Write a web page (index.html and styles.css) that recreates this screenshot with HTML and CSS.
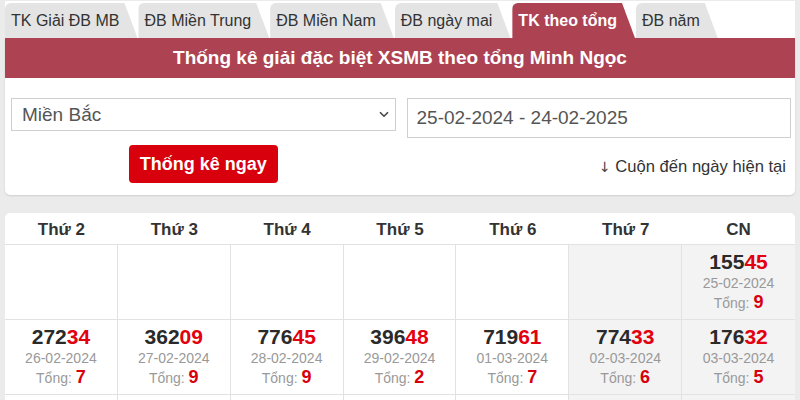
FILE: index.html
```html
<!DOCTYPE html>
<html lang="vi">
<head>
<meta charset="utf-8">
<title>Thống kê giải đặc biệt XSMB theo tổng</title>
<link rel="stylesheet" href="styles.css">
</head>
<body>
<div class="wrap">
  <nav class="tabs">
    <a class="tab">TK Giải ĐB MB</a>
    <a class="tab">ĐB Miền Trung</a>
    <a class="tab">ĐB Miền Nam</a>
    <a class="tab">ĐB ngày mai</a>
    <a class="tab active">TK theo tổng</a>
    <a class="tab">ĐB năm</a>
  </nav>
  <section class="panel">
    <h1 class="panel-title">Thống kê giải đặc biệt XSMB theo tổng Minh Ngọc</h1>
    <div class="form">
      <div class="select-wrap">
        <select class="field select"><option>Miền Bắc</option></select>
        <svg class="chev" width="10" height="7" viewBox="0 0 10 7"><path d="M1 1.2 L5 5.2 L9 1.2" fill="none" stroke="#444" stroke-width="1.6"/></svg>
      </div>
      <input class="field date" type="text" value="25-02-2024 - 24-02-2025">
      <div class="btn-cell"><button class="btn">Thống kê ngay</button></div>
      <a class="scroll-link"><span class="arrow">&#8595;&#xFE0E;</span> Cuộn đến ngày hiện tại</a>
    </div>
  </section>
  <section class="calendar">
    <div class="head">Thứ 2</div>
    <div class="head">Thứ 3</div>
    <div class="head">Thứ 4</div>
    <div class="head">Thứ 5</div>
    <div class="head">Thứ 6</div>
    <div class="head">Thứ 7</div>
    <div class="head">CN</div>

    <div class="cell"></div>
    <div class="cell"></div>
    <div class="cell"></div>
    <div class="cell"></div>
    <div class="cell"></div>
    <div class="cell weekend"></div>
    <div class="cell weekend last">
      <div class="num">155<span class="tail">45</span></div>
      <div class="day">25-02-2024</div>
      <div class="sum">Tổng: <b>9</b></div>
    </div>

    <div class="cell">
      <div class="num">272<span class="tail">34</span></div>
      <div class="day">26-02-2024</div>
      <div class="sum">Tổng: <b>7</b></div>
    </div>
    <div class="cell">
      <div class="num">362<span class="tail">09</span></div>
      <div class="day">27-02-2024</div>
      <div class="sum">Tổng: <b>9</b></div>
    </div>
    <div class="cell">
      <div class="num">776<span class="tail">45</span></div>
      <div class="day">28-02-2024</div>
      <div class="sum">Tổng: <b>9</b></div>
    </div>
    <div class="cell">
      <div class="num">396<span class="tail">48</span></div>
      <div class="day">29-02-2024</div>
      <div class="sum">Tổng: <b>2</b></div>
    </div>
    <div class="cell">
      <div class="num">719<span class="tail">61</span></div>
      <div class="day">01-03-2024</div>
      <div class="sum">Tổng: <b>7</b></div>
    </div>
    <div class="cell weekend">
      <div class="num">774<span class="tail">33</span></div>
      <div class="day">02-03-2024</div>
      <div class="sum">Tổng: <b>6</b></div>
    </div>
    <div class="cell weekend last">
      <div class="num">176<span class="tail">32</span></div>
      <div class="day">03-03-2024</div>
      <div class="sum">Tổng: <b>5</b></div>
    </div>

    <div class="cell"></div>
    <div class="cell"></div>
    <div class="cell"></div>
    <div class="cell"></div>
    <div class="cell"></div>
    <div class="cell weekend"></div>
    <div class="cell weekend last"></div>
  </section>
</div>
</body>
</html>
```
FILE: styles.css
```css
* { box-sizing: border-box; }
html, body { margin: 0; padding: 0; }
body {
  background: #ebebeb;
  font-family: "Liberation Sans", Arial, sans-serif;
  color: #333;
  overflow: hidden;
  height: 400px;
}
.wrap {
  margin: 1px 5px 0;
}
.tabs {
  display: flex;
  gap: 1px;
  background: #fff;
  padding-top: 2px;
  height: 37px;
}
.tab {
  display: flex;
  align-items: center;
  height: 35px;
  padding: 1px 18px 0 6px;
  font-size: 16px;
  color: #333;
  background: #e4e4e4;
  border-top-left-radius: 6px;
  clip-path: polygon(0 0, calc(100% - 13px) 0, 100% 100%, 0 100%);
  white-space: nowrap;
}
.tab.active {
  background: #ad4252;
  color: #fff;
  font-weight: bold;
  margin-left: 1px;
}
.panel {
  background: #fff;
  border-radius: 0 0 5px 5px;
  box-shadow: 0 1px 2px rgba(0,0,0,0.12);
}
.panel-title {
  margin: 0;
  height: 40px;
  line-height: 40px;
  background: #ad4252;
  color: #fff;
  font-size: 19px;
  font-weight: bold;
  text-align: center;
}
.form {
  display: grid;
  grid-template-columns: 1fr 1fr;
  grid-template-rows: 40px 38px;
  column-gap: 11px;
  row-gap: 7px;
  padding: 20px 4px 12px 6px;
}
.select-wrap {
  position: relative;
  height: 33px;
}
.field {
  font-family: "Liberation Sans", Arial, sans-serif;
  font-size: 19px;
  color: #555;
  border: 1px solid #cfcfcf;
  background: #fff;
  width: 100%;
  outline: none;
  border-radius: 0;
  margin: 0;
}
.select {
  appearance: none;
  -webkit-appearance: none;
  height: 33px;
  padding: 0 0 0 10px;
}
.chev {
  position: absolute;
  right: 7px;
  top: 13px;
  pointer-events: none;
}
.date {
  height: 40px;
  padding: 0 0 0 9px;
}
.btn-cell {
  display: flex;
  justify-content: center;
}
.btn {
  height: 38px;
  padding: 0 11px;
  border: 0;
  border-radius: 4px;
  background: #d8000c;
  color: #fff;
  font-family: "Liberation Sans", Arial, sans-serif;
  font-size: 18px;
  font-weight: bold;
}
.scroll-link {
  justify-self: end;
  align-self: center;
  margin: 5px 5px 0 0;
  font-size: 16.6px;
  color: #333;
}
.arrow {
  font-family: "DejaVu Sans", sans-serif;
  font-size: 14px;
  color: #444;
}
.calendar {
  margin-top: 18px;
  background: #fff;
  border-radius: 5px 5px 0 0;
  display: grid;
  grid-template-columns: repeat(7, 1fr);
}
.head {
  height: 32px;
  line-height: 33px;
  text-align: center;
  font-size: 17px;
  font-weight: bold;
  color: #333;
  border-bottom: 1px solid #e2e2e2;
}
.cell {
  height: 75px;
  padding-top: 6px;
  text-align: center;
  border-right: 1px solid #e2e2e2;
  border-bottom: 1px solid #e2e2e2;
}
.cell.last { border-right: 0; }
.cell.weekend { background: #f3f3f3; }
.num {
  font-size: 21px;
  font-weight: bold;
  line-height: 22px;
  color: #2a2a2a;
}
.tail { color: #e3000f; }
.day {
  font-size: 14px;
  line-height: 20px;
  color: #999;
}
.sum {
  font-size: 14px;
  line-height: 19px;
  color: #999;
}
.sum b {
  font-size: 18px;
  color: #d8000c;
}
```
